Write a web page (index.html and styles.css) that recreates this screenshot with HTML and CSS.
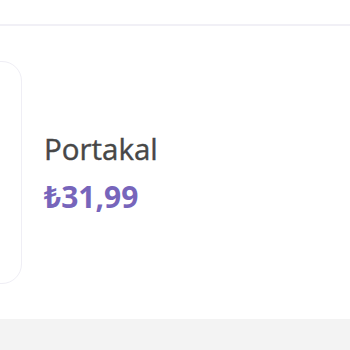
FILE: index.html
```html
<!DOCTYPE html>
<html lang="tr">
<head>
<meta charset="utf-8">
<link rel="stylesheet" href="styles.css">
</head>
<body>
<div class="header"></div>
<div class="main">
  <div class="card"></div>
  <div class="info">
    <div class="name">Portakal</div>
    <div class="price">₺31,99</div>
  </div>
</div>
<div class="footer"></div>
</body>
</html>
```
FILE: styles.css
```css
html, body {
  margin: 0;
  padding: 0;
  background: #fff;
  overflow: hidden;
  font-family: "Open Sans", "Noto Sans", sans-serif;
}
.header {
  height: 24px;
  border-bottom: 2px solid #f1f0f6;
}
.main {
  height: 293px;
  display: flex;
  align-items: center;
  gap: 22px;
}
.card {
  flex: none;
  width: 200px;
  height: 221px;
  margin-left: -180px;
  border: 1px solid #efeef5;
  border-radius: 20px;
  background: #fff;
}
.info {
  display: flex;
  flex-direction: column;
  gap: 8px;
}
.name {
  font-size: 29.5px;
  line-height: 40px;
  color: #474747;
  -webkit-text-stroke: 0.4px #474747;
}
.price {
  font-size: 30px;
  line-height: 40px;
  font-weight: 700;
  color: #7765bb;
}
.footer {
  height: 40px;
  background: #f3f3f3;
}
```
